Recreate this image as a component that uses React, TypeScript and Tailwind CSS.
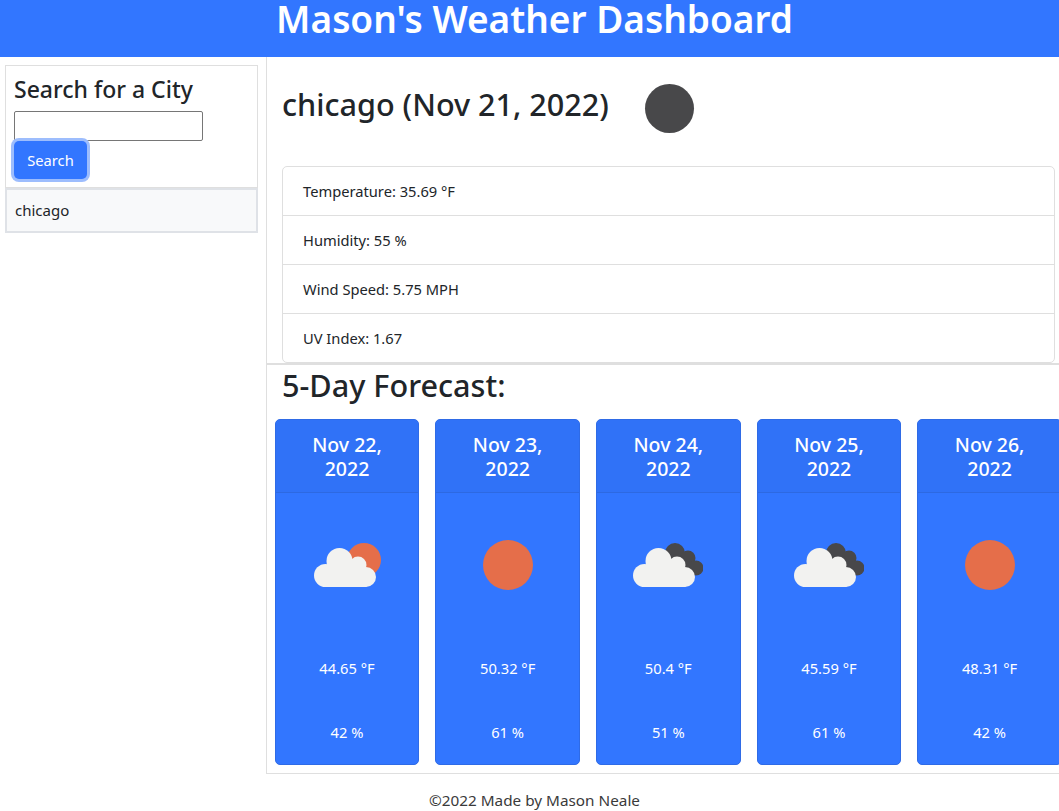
import React from 'react';

const font = { fontFamily: '"Noto Sans", "Open Sans", sans-serif' };

type Forecast = { date: string; year: string; icon: 'partly' | 'sun' | 'cloudy'; temp: string; humidity: string };

const forecasts: Forecast[] = [
  { date: 'Nov 22,', year: '2022', icon: 'partly', temp: '44.65 °F', humidity: '42 %' },
  { date: 'Nov 23,', year: '2022', icon: 'sun', temp: '50.32 °F', humidity: '61 %' },
  { date: 'Nov 24,', year: '2022', icon: 'cloudy', temp: '50.4 °F', humidity: '51 %' },
  { date: 'Nov 25,', year: '2022', icon: 'cloudy', temp: '45.59 °F', humidity: '61 %' },
  { date: 'Nov 26,', year: '2022', icon: 'sun', temp: '48.31 °F', humidity: '42 %' },
];

const stats = ['Temperature: 35.69 °F', 'Humidity: 55 %', 'Wind Speed: 5.75 MPH', 'UV Index: 1.67'];

const Cloud = ({ x = 0 }: { x?: number }) => (
  <g fill="#f2f2f0" transform={`translate(${x} 0)`}>
    <circle cx="25.5" cy="21" r="13" />
    <circle cx="44" cy="25" r="8.5" />
    <circle cx="52" cy="37" r="10" />
    <circle cx="11.5" cy="35.5" r="11.5" />
    <rect x="11.5" y="30" width="41" height="17" />
    <rect x="25" y="21" width="21" height="26" />
  </g>
);

const WeatherIcon = ({ icon }: { icon: Forecast['icon'] }) => (
  <svg width="70" height="50" viewBox="0 0 70 50">
    {icon === 'sun' && <circle cx="35" cy="25" r="25" fill="#e56e4a" />}
    {icon === 'partly' && (
      <>
        <circle cx="52" cy="20" r="17" fill="#e56e4a" />
        <Cloud x={2} />
      </>
    )}
    {icon === 'cloudy' && (
      <>
        <g fill="#48484a">
          <circle cx="42" cy="13" r="10" />
          <circle cx="55" cy="18" r="7.5" />
          <circle cx="63" cy="28" r="7.5" />
          <rect x="40" y="16" width="18" height="19" />
        </g>
        <Cloud />
      </>
    )}
  </svg>
);

const ForecastCard = ({ item }: { item: Forecast }) => (
  <div className="w-[144.67px] shrink-0 h-[346px] rounded-[5px] border border-[#2f6be6] bg-[#3276ff] text-white">
    <div className="h-[73px] border-b border-[#2d69e2] bg-[#3072f7] pt-[13px] text-center text-[19.5px] leading-[24px] font-medium rounded-t-[5px]">
      {item.date}
      <br />
      {item.year}
    </div>
    <div className="flex flex-col items-center pt-[47px] text-[14.7px] leading-[24px]">
      <WeatherIcon icon={item.icon} />
      <div className="mt-[66px]">{item.temp}</div>
      <div className="mt-[40px]">{item.humidity}</div>
    </div>
  </div>
);

export default function App() {
  return (
    <div style={font} className="h-[811px] w-[1059px] overflow-hidden bg-white text-[#212529]">
      <header className="h-[57px] bg-[#3276ff] pl-[10px] text-center text-[37px] font-semibold leading-[38px] text-white">
        Mason's Weather Dashboard
      </header>
      <div className="flex h-[717px]">
        <aside className="w-[266px] shrink-0 pl-[5px] pr-[8px] pt-[8px]">
          <div className="h-[123px] border border-[#dfdfdf] px-[8px] pt-[8px]">
            <h2 className="h-[37px] text-[23px] font-medium leading-[31px]">Search for a City</h2>
            <input className="block h-[30px] w-[189px] rounded-[2px] border border-[#767676] bg-white" />
            <button className="block h-[38px] w-[73px] rounded-[5px] bg-[#3276ff] text-[14.7px] text-white ring-[3px] ring-[#9dbdfd]">
              Search
            </button>
          </div>
          <div className="h-[45px] border-2 border-[#dfe2e7] bg-[#f8f9fa] pl-[8px] text-[15px] leading-[41px]">chicago</div>
        </aside>
        <main className="flex-1 overflow-hidden border-l border-b border-[#dfdfdf]">
          <div className="flex h-[109px] items-start pl-[15px] pt-[27px]">
            <h1 className="text-[30.6px] font-medium leading-[40px]">chicago (Nov 21, 2022)</h1>
            <div className="ml-[36px] h-[49px] w-[49px] rounded-full bg-[#48484a]" />
          </div>
          <ul className="ml-[15px] mr-[4px] rounded-[5px] border border-[#dfdfdf] text-[14.7px]">
            {stats.map((stat) => (
              <li key={stat} className="h-[49px] border-b border-[#dfdfdf] pl-[20px] leading-[49px] last:h-[48px] last:border-b-0">
                {stat}
              </li>
            ))}
          </ul>
          <div className="h-[2px] bg-[#dfdfdf]" />
          <h2 className="h-[54px] pl-[15px] text-[30.6px] font-medium leading-[40px]">5-Day Forecast:</h2>
          <div className="flex gap-[16px] pl-[7.67px]">
            {forecasts.map((item) => (
              <ForecastCard key={item.date} item={item} />
            ))}
          </div>
        </main>
      </div>
      <footer className="pl-[10px] pt-[14px] text-center text-[15.3px] leading-[24px] text-[#3a3a3a]">©2022 Made by Mason Neale</footer>
    </div>
  );
}
